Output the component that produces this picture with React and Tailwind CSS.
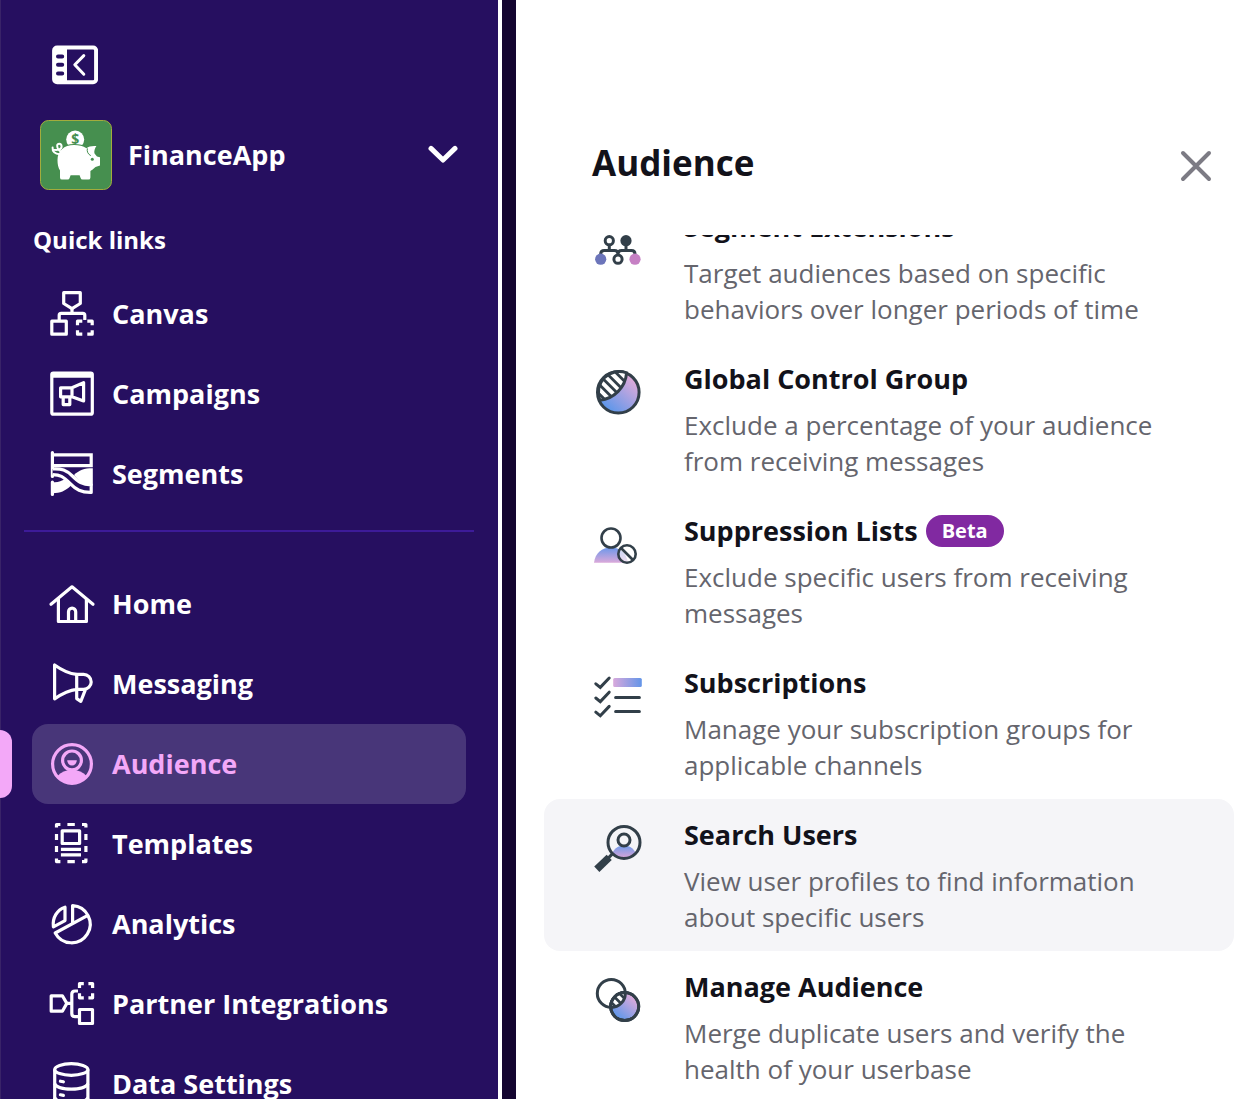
import React from "react";

const INK = "#323f49";

function NavSvg({ children }) {
  return (
    <svg
      viewBox="0 0 48 48"
      className="size-12 shrink-0"
      fill="none"
      stroke="currentColor"
      strokeWidth="3.2"
      strokeLinejoin="round"
      aria-hidden="true"
    >
      {children}
    </svg>
  );
}

const CanvasIcon = () => (
  <NavSvg>
    <path d="M15.7 2.7H32.3V13.5L24 18.6L15.7 13.5Z" />
    <path d="M24 18.6V23.3M11.2 30V25.3q0-2 2-2H34.8q2 0 2 2V30" />
    <path d="M3.8 31.2H18.3V44.2H3.8Z" />
    <path d="M34.3 31.2H29.5V35.2M39.3 31.2H44.2V35.2M29.5 40.2V44.2H34.3M44.2 40.2V44.2H39.3" />
  </NavSvg>
);

const CampaignsIcon = () => (
  <NavSvg>
    <rect x="3.8" y="3" width="40.5" height="41.2" rx="1.5" />
    <path d="M4 5.2H44" strokeWidth="5" />
    <path d="M12.6 17.8H24V26.8H12.6ZM24 17.8L35.6 12.6V31L24 26.8M15.2 26.8V34.6H21.8V26.8" />
  </NavSvg>
);

const SegmentsIcon = () => (
  <NavSvg>
    <path d="M4.4 2.6V26.4M4.4 32V44.4" strokeLinecap="round" />
    <path d="M4.4 4.9H43.2V15.7H4.4" strokeLinejoin="miter" />
    <path
      d="M44.8 18.2C36 18.2 31 20 26 25C31 31.4 36 35.4 44.8 35.4Z"
      fill="currentColor"
      stroke="none"
    />
    <path
      d="M5 32.2C10 32.8 13.5 30.8 16.8 29.2L23 35.5C17.5 41 12 43.2 5 43.2Z"
      fill="currentColor"
      stroke="none"
    />
    <path
      d="M4.6 19C14 18.6 18 20 24.4 26C30.6 32 34 34.5 43.2 34.8V42.4C33 42.6 28 39.6 22 33.4C15 26.2 12 24.8 4.6 24.6"
      fill="#260f60"
    />
  </NavSvg>
);

const HomeIcon = () => (
  <NavSvg>
    <path d="M3 24.2L24 6.8L45 24.2" strokeLinecap="round" />
    <path d="M10.4 19V41.5H38.4V19" />
    <path d="M20.5 41V31.8a3.6 3.6 0 0 1 7.2 0V41" />
  </NavSvg>
);

const MessagingIcon = () => (
  <NavSvg>
    <path d="M6.6 5V38.8C13 34.5 20 30.4 28.7 29.4V14.4C20 13.6 13 9.6 6.6 5Z" />
    <path d="M28.7 14.4H35.6a7.6 7.5 0 0 1 0 15H28.7V38.6L32.8 41.4L37.6 29.2" />
  </NavSvg>
);

const AudienceIcon = () => (
  <NavSvg>
    <circle cx="24" cy="24" r="19.4" />
    <circle cx="24" cy="20.4" r="9.4" />
    <path d="M19.2 20.2H28.8a4.8 5.4 0 0 1-9.6 0Z" fill="currentColor" stroke="none" />
    <path
      d="M9 36.5C13 32 18 29.8 24 29.8C30 29.8 35 32 39 36.5A20 20 0 0 1 9 36.5Z"
      fill="currentColor"
      stroke="none"
    />
  </NavSvg>
);

const TemplatesIcon = () => (
  <NavSvg>
    <path d="M12.4 4.5H8.5V7.6M34 4.5H37.9V7.6M12.4 41.6H8.5V38.5M34 41.6H37.9V38.5M19.4 4.5H26.8M19.4 41.6H26.8M8.5 14V20M8.5 26V32M37.9 14V20M37.9 26V32" />
    <path d="M14.2 10.8H31.6V23.5H14.2Z" />
    <path d="M12.9 29.3H33M12.9 34.9H33" />
  </NavSvg>
);

const AnalyticsIcon = () => (
  <NavSvg>
    <path d="M17 7.2V20.6L5.4 26.8C4.2 18 9 9.8 17 7.2Z" />
    <path d="M24.6 23.3V5.6A18.6 18.6 0 1 1 7.2 33L39.8 15.4" />
  </NavSvg>
);

const PartnerIcon = () => (
  <NavSvg>
    <path d="M3.2 15.8H14.4L18.8 23.4L14.4 31.2H3.2Z" />
    <path d="M18.8 23.4H23.8M30 11H27q-3.2 0-3.2 3.2V33.4q0 3.2 3.2 3.2H30" />
    <path d="M31.5 29.5H44.5V43.5H31.5Z" />
    <path d="M35.8 3.6H31.5V8M40.4 3.6H44.6V8M31.5 13.2V17.8H35.8M44.6 13.2V17.8H40.4" />
  </NavSvg>
);

const DataIcon = () => (
  <NavSvg>
    <ellipse cx="23.3" cy="9.5" rx="16.6" ry="5.8" />
    <path d="M6.7 9.5V48M39.9 9.5V48" />
    <path d="M6.7 23.5C9 31 37.6 31 39.9 23.5M6.7 37.5C9 45 37.6 45 39.9 37.5" />
    <path d="M12.4 21.2L15.4 21.8M12.4 34.8L15.4 35.4" strokeLinecap="round" />
  </NavSvg>
);

function PiggyLogo() {
  return (
    <svg viewBox="0 0 72 70" className="h-[70px] w-[72px] shrink-0" aria-hidden="true">
      <rect x="0.5" y="0.5" width="71" height="69" rx="8" fill="#468f4f" stroke="#a3ac3c" />
      <circle cx="35.2" cy="19.6" r="9" fill="#fff" />
      <text
        x="35.2"
        y="24.4"
        textAnchor="middle"
        fontFamily="Open Sans, sans-serif"
        fontWeight="700"
        fontSize="14"
        fill="#468f4f"
      >
        $
      </text>
      <g fill="#fff" stroke="#468f4f" strokeWidth="2" paintOrder="stroke">
        <path d="M17.5 40C17.5 31 24 25 34 25C39 25 43 25.8 46.5 28.2C48.5 26.4 52 25.6 56.4 26C54.8 28.4 54 31 54.4 33.2C55.4 34.4 56 35.6 57 36.4L60 37.2V45.6L55.5 47C53.5 49 51.8 50 50.4 51V57.4Q50.4 59.6 48.4 59.6H42.6Q41 59.6 40.6 58L39.6 55.2H30.6L29.6 58Q29.2 59.6 27.6 59.6H22Q20 59.6 20 57.4V50.6C18.2 47.6 17.5 44 17.5 40Z" />
      </g>
      <path
        d="M19.6 34.2C15 34 12.2 31.6 12.6 27.6M12.8 29.6C17 30.6 21.8 29.8 21.6 26.2C21.4 23 17 23 17.2 26C17.4 29.4 19 31 21.6 31.6"
        fill="none"
        stroke="#fff"
        strokeWidth="2"
        strokeLinecap="round"
      />
      <circle cx="52.3" cy="39.2" r="1.5" fill="#468f4f" />
      <path d="M47.4 28.4C46.6 31.6 48.2 34.4 50.8 35.6" fill="none" stroke="#468f4f" strokeWidth="1" />
    </svg>
  );
}

function ItemSvg({ children }) {
  return (
    <svg
      viewBox="0 0 52 52"
      className="mt-2 size-[52px] shrink-0"
      fill="none"
      stroke={INK}
      strokeWidth="3"
      aria-hidden="true"
    >
      {children}
    </svg>
  );
}

function Gradient({ id, from, to, ...rest }) {
  return (
    <linearGradient id={id} {...rest}>
      <stop offset="0" stopColor={from} />
      <stop offset="1" stopColor={to} />
    </linearGradient>
  );
}

const ExtensionsIcon = () => (
  <ItemSvg>
    <circle cx="17.3" cy="25.7" r="4.1" />
    <circle cx="34" cy="25.7" r="5.6" fill={INK} stroke="none" />
    <path d="M17.3 30V35.4M34 30V35.4M8.7 40V39q0-3.6 3.6-3.6H22.4q3.6 0 3.6 3.6V40M26 39q0-3.6 3.6-3.6H39.4q3.6 0 3.6 3.6V40" />
    <circle cx="26" cy="44.2" r="4.1" fill="#fff" />
    <circle cx="8.7" cy="44.2" r="5.6" fill="#6c75ba" stroke="none" />
    <circle cx="43" cy="44.2" r="5.6" fill="#c680c4" stroke="none" />
  </ItemSvg>
);

const ControlIcon = () => (
  <ItemSvg>
    <defs>
      <Gradient id="control-fill" from="#5f97ea" to="#dcaadb" x1="0.25" y1="0.9" x2="0.85" y2="0.2" />
      <clipPath id="control-hatch">
        <path d="M7.8 33.2A30 30 0 0 0 34.6 5.8A21 21 0 0 0 7.8 33.2Z" />
      </clipPath>
    </defs>
    <circle cx="26.3" cy="25.3" r="20.8" fill="url(#control-fill)" />
    <path d="M7.8 33.2A30 30 0 0 0 34.6 5.8A21 21 0 0 0 7.8 33.2Z" fill="#fff" />
    <g clipPath="url(#control-hatch)" strokeWidth="2.8">
      <path d="M0 19.7L20 39.7M0 10.3L30 40.3M0 0.7L35 35.7M8.3 0L40 31.7M18.3 0L45 26.7" />
    </g>
  </ItemSvg>
);

const SuppressionIcon = () => (
  <ItemSvg>
    <defs>
      <Gradient id="suppress-fill" from="#6c97ea" to="#dba9da" x1="0" y1="0" x2="0" y2="1" />
    </defs>
    <path
      d="M2 43.8C3 34 10 28.4 19 28.4C28 28.4 34.5 34 36 43.8Z"
      fill="url(#suppress-fill)"
      stroke="none"
    />
    <circle cx="19" cy="19" r="9.5" fill="#fff" strokeWidth="2.6" />
    <circle cx="35" cy="35" r="8.7" fill="#fff" fillOpacity="0.6" strokeWidth="2.6" />
    <path d="M29 29L41 41" strokeWidth="2.6" />
  </ItemSvg>
);

const SubscriptionsIcon = () => (
  <ItemSvg>
    <defs>
      <Gradient id="subs-fill" from="#d8a9dc" to="#6395e8" x1="0" y1="0" x2="1" y2="0" />
    </defs>
    <rect x="21.2" y="7" width="28.6" height="9" rx="1.5" fill="url(#subs-fill)" stroke="none" />
    <path
      d="M3.8 12.8L8.3 16.4L17.2 7M3.8 27L8.3 30.6L17.2 21.2M3.8 41.2L8.3 44.8L17.2 35.4M23.6 26.4H47.4M23.6 40.4H47.4"
      strokeLinecap="round"
    />
  </ItemSvg>
);

const SearchUsersIcon = () => (
  <ItemSvg>
    <defs>
      <Gradient id="search-fill" from="#6f9bea" to="#d3a3d8" x1="0" y1="0" x2="0" y2="1" />
    </defs>
    <path
      d="M20.4 29.6C23 24.8 27 22.4 32 22.4C37 22.4 41 24.8 43.6 29.6C40 33.6 36 34.4 32 34.4C28 34.4 24 33.6 20.4 29.6Z"
      fill="url(#search-fill)"
      stroke="none"
    />
    <circle cx="32" cy="19.4" r="16" />
    <circle cx="32" cy="17" r="6" fill="#f5f5f8" />
    <path d="M20.6 30.6L16 35.4" />
    <path d="M17.2 34.4L4.8 46.2" strokeWidth="7.4" />
  </ItemSvg>
);

const ManageIcon = () => (
  <ItemSvg>
    <defs>
      <Gradient id="manage-fill" from="#5f97ea" to="#dcaadb" x1="0.25" y1="0.9" x2="0.85" y2="0.2" />
      <clipPath id="manage-first">
        <circle cx="19.3" cy="18.4" r="14" />
      </clipPath>
      <clipPath id="manage-second">
        <circle cx="32.7" cy="31.6" r="14" />
      </clipPath>
    </defs>
    <circle cx="32.7" cy="31.6" r="14" fill="url(#manage-fill)" />
    <g clipPath="url(#manage-first)">
      <circle cx="32.7" cy="31.6" r="14" fill="#fff" />
      <g clipPath="url(#manage-second)">
        <path d="M18 26L27 35M22 21.5L31 30.5M27 18L36 27" strokeWidth="2.6" />
      </g>
    </g>
    <circle cx="19.3" cy="18.4" r="14" />
    <circle cx="32.7" cy="31.6" r="14" />
  </ItemSvg>
);

const quickLinks = [
  { label: "Canvas", Icon: CanvasIcon },
  { label: "Campaigns", Icon: CampaignsIcon },
  { label: "Segments", Icon: SegmentsIcon },
];

const mainLinks = [
  { label: "Home", Icon: HomeIcon },
  { label: "Messaging", Icon: MessagingIcon },
  { label: "Audience", Icon: AudienceIcon, active: true },
  { label: "Templates", Icon: TemplatesIcon },
  { label: "Analytics", Icon: AnalyticsIcon },
  { label: "Partner Integrations", Icon: PartnerIcon },
  { label: "Data Settings", Icon: DataIcon },
];

const panelItems = [
  {
    title: "Segment Extensions",
    text: "Target audiences based on specific behaviors over longer periods of time",
    Icon: ExtensionsIcon,
  },
  {
    title: "Global Control Group",
    text: "Exclude a percentage of your audience from receiving messages",
    Icon: ControlIcon,
  },
  {
    title: "Suppression Lists",
    badge: "Beta",
    text: "Exclude specific users from receiving messages",
    Icon: SuppressionIcon,
  },
  {
    title: "Subscriptions",
    text: "Manage your subscription groups for applicable channels",
    Icon: SubscriptionsIcon,
  },
  {
    title: "Search Users",
    text: "View user profiles to find information about specific users",
    Icon: SearchUsersIcon,
    active: true,
  },
  {
    title: "Manage Audience",
    text: "Merge duplicate users and verify the health of your userbase",
    Icon: ManageIcon,
  },
];

function NavLink({ label, Icon, active }) {
  return (
    <li className="relative pr-8 pl-[31px]">
      {active && (
        <span className="absolute top-1.5 -left-px h-[68px] w-3 rounded-r-xl bg-[#f3a8f8]" />
      )}
      <a
        href="#"
        aria-current={active ? "page" : undefined}
        className={
          active
            ? "flex h-20 items-center gap-4 rounded-2xl bg-[#483679] px-4 text-[#f3a8f8]"
            : "flex h-20 items-center gap-4 rounded-2xl px-4 text-white"
        }
      >
        <Icon />
        <span className="text-[27px] font-bold whitespace-nowrap">{label}</span>
      </a>
    </li>
  );
}

function PanelItem({ title, text, badge, Icon, active }) {
  return (
    <li>
      <a
        href="#"
        className={
          active
            ? "flex gap-10 rounded-2xl bg-[#f5f5f8] px-12 py-4"
            : "flex gap-10 rounded-2xl px-12 py-4"
        }
      >
        <Icon />
        <div className="min-w-0 flex-1">
          <h2 className="flex h-10 items-center gap-2 text-[27px] font-bold whitespace-nowrap text-[#12121a]">
            {title}
            {badge && (
              <span className="flex h-8 items-center rounded-full bg-[#8129a1] px-4 text-[20px] font-bold text-white">
                {badge}
              </span>
            )}
          </h2>
          <p className="mt-2 text-[26px] leading-9 text-[#65656d]">{text}</p>
        </div>
      </a>
    </li>
  );
}

export default function App() {
  return (
    <div className="flex h-screen overflow-hidden bg-white font-['Open_Sans',sans-serif]">
      <aside className="flex w-[498px] shrink-0 flex-col border-l border-[#392368] bg-[#260f60] text-white">
        <button type="button" aria-label="Collapse sidebar" className="mt-[45px] ml-[51px] self-start">
          <svg viewBox="0 0 46 40" className="h-10 w-[46px]" fill="none" aria-hidden="true">
            <rect x="2.1" y="2.6" width="42" height="34.6" rx="3" stroke="#fff" strokeWidth="4" />
            <path d="M3 3H15V37H3Z" fill="#fff" />
            <path
              d="M6 11.4H10.2M6 19.8H10.2M6 28.4H10.2"
              stroke="#260f60"
              strokeWidth="4"
              strokeLinecap="round"
            />
            <path
              d="M31.8 10.6L22.8 19.8L31.8 29.2"
              stroke="#fff"
              strokeWidth="3"
              strokeLinecap="round"
              strokeLinejoin="round"
            />
          </svg>
        </button>
        <button type="button" className="mt-[35px] flex items-center gap-4 pr-10 pl-[39px] text-left">
          <PiggyLogo />
          <span className="flex-1 text-[27px] font-bold">FinanceApp</span>
          <svg viewBox="0 0 30 20" className="h-5 w-[30px]" fill="none" aria-hidden="true">
            <path
              d="M3 3.4L15 15L27 3.4"
              stroke="#fff"
              strokeWidth="5"
              strokeLinecap="round"
              strokeLinejoin="round"
            />
          </svg>
        </button>
        <h2 className="mt-8 pl-8 text-[24px] leading-9 font-bold">Quick links</h2>
        <nav aria-label="Quick links" className="mt-4">
          <ul>
            {quickLinks.map((link) => (
              <NavLink key={link.label} {...link} />
            ))}
          </ul>
        </nav>
        <hr className="mt-4 mr-6 ml-[23px] border-t-2 border-[#3d1b99]" />
        <nav aria-label="Main" className="mt-8">
          <ul>
            {mainLinks.map((link) => (
              <NavLink key={link.label} {...link} />
            ))}
          </ul>
        </nav>
      </aside>
      <div className="w-1 shrink-0 bg-white" />
      <div className="w-3.5 shrink-0 bg-[#140530]" />
      <main className="flex min-w-0 flex-1 flex-col">
        <header className="flex items-end justify-between pt-[135px] pr-8 pb-11 pl-[76px]">
          <h1 className="text-[35px] leading-[56px] font-bold text-[#12121a]">Audience</h1>
          <button type="button" aria-label="Close" className="p-[9px]">
            <svg viewBox="0 0 32 32" className="size-8" fill="none" aria-hidden="true">
              <path d="M3 3L29 29M29 3L3 29" stroke="#7c7b84" strokeWidth="4" strokeLinecap="round" />
            </svg>
          </button>
        </header>
        <div className="min-h-0 flex-1 overflow-hidden">
          <ul className="-mt-11 pr-[19px] pl-7">
            {panelItems.map((item) => (
              <PanelItem key={item.title} {...item} />
            ))}
          </ul>
        </div>
      </main>
    </div>
  );
}
